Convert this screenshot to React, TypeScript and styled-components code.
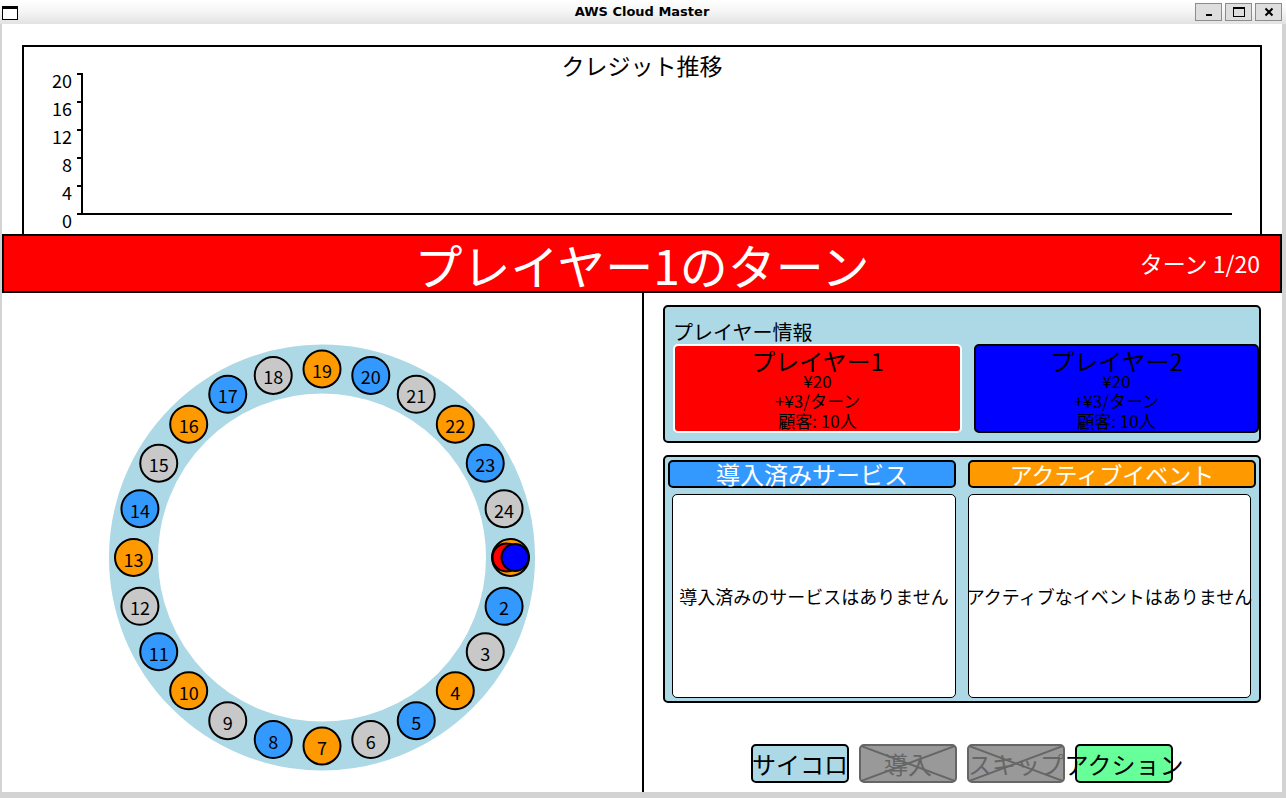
import React from "react";
import styled, { createGlobalStyle } from "styled-components";

const GlobalStyle = createGlobalStyle`
  html, body { margin: 0; padding: 0; background: #ffffff; }
  body { font-family: "Noto Sans CJK JP", "Noto Sans", sans-serif; }
  * { box-sizing: border-box; }
`;

const JP = `"Noto Sans CJK JP", "Noto Sans", sans-serif`;

const Window = styled.div`
  width: 1286px;
  height: 798px;
  display: flex;
  flex-direction: column;
  overflow: hidden;
  background: #d3d3d3;
`;

const TitleBar = styled.div`
  flex: none;
  height: 24px;
  display: grid;
  grid-template-columns: 1fr auto 1fr;
  align-items: center;
  padding: 0 4px 0 2px;
  background: linear-gradient(#ffffff 0%, #f6f6f6 45%, #e2e2e2 100%);
`;

const AppIcon = styled.div`
  width: 16px;
  height: 14px;
  margin-top: 1px;
  border: 1px solid #000;
  border-top-width: 3px;
  background: #fff;
`;

const TitleText = styled.div`
  font-family: "DejaVu Sans", sans-serif;
  font-weight: bold;
  font-size: 13px;
  color: #000;
  line-height: 20px;
`;

const WinButtons = styled.div`
  justify-self: end;
  display: flex;
  gap: 3px;
`;

const WinButton = styled.div`
  width: 27px;
  height: 18px;
  background: #dedede;
  border: 1px solid #8c8c8c;
  display: flex;
  align-items: center;
  justify-content: center;
  margin-top: -1px;
`;

const Frame = styled.div`
  flex: 1;
  margin: 0 4px 6px 2px;
  background: #ffffff;
  display: flex;
  flex-direction: column;
  min-height: 0;
`;

const ChartBox = styled.div`
  flex: none;
  height: 189px;
  margin: 21px 20px 0 20px;
  border: 2px solid #000;
  border-bottom: none;
  display: flex;
  flex-direction: column;
`;

const ChartTitle = styled.div`
  height: 15px;
  margin-top: 6px;
  line-height: 24px;
  font-size: 23px;
  text-align: center;
  color: #000;
  font-family: ${JP};
`;

const ChartSvg = styled.svg`
  display: block;
  overflow: visible;
  margin-top: 2px;
`;

const Banner = styled.div`
  flex: none;
  height: 59px;
  border: 2px solid #000;
  background: #ff0000;
  display: grid;
  grid-template-columns: 1fr auto 1fr;
  align-items: center;
  color: #ffffff;
`;

const BannerTitle = styled.div`
  grid-column: 2;
  font-size: 48px;
  line-height: 1;
  white-space: nowrap;
  font-family: ${JP};
`;

const BannerTurn = styled.div`
  grid-column: 3;
  justify-self: end;
  margin-right: 20px;
  font-size: 23px;
  line-height: 1;
  white-space: nowrap;
  font-family: ${JP};
`;

const Bottom = styled.div`
  flex: 1;
  display: flex;
  min-height: 0;
`;

const BoardPanel = styled.div`
  flex: none;
  width: 642px;
  border-right: 2px solid #000;
`;

const BoardSvg = styled.svg`
  display: block;
`;

const SidePanel = styled.div`
  flex: 1;
  display: flex;
  flex-direction: column;
  padding: 12px 21px 0 19px;
`;

const InfoBox = styled.div`
  height: 138px;
  border: 2px solid #000;
  border-radius: 5px;
  background: #add8e6;
  padding: 13px 0 0 8px;
  display: flex;
  flex-direction: column;
`;

const InfoLabel = styled.div`
  font-size: 20px;
  line-height: 24px;
  color: #000;
  white-space: nowrap;
`;

const CardRow = styled.div`
  display: grid;
  grid-template-columns: 289px 1fr;
  gap: 12px;
`;

const PlayerCard = styled.div<{ $bg: string; $active: boolean }>`
  height: 89px;
  background: ${(p) => p.$bg};
  border: 2px solid ${(p) => (p.$active ? "#ffffff" : "#000000")};
  border-radius: 5px;
  padding-top: 5px;
  display: flex;
  flex-direction: column;
  align-items: center;
  color: #000;
`;

const CardName = styled.div`
  font-size: 24px;
  line-height: 20px;
  white-space: nowrap;
`;

const CardLine = styled.div`
  font-size: 17px;
  line-height: 20px;
  white-space: nowrap;
`;

const ServiceBox = styled.div`
  height: 248px;
  margin-top: 12px;
  border: 2px solid #000;
  border-radius: 5px;
  background: #add8e6;
  padding: 3px;
  display: grid;
  grid-template-columns: 288px 288px;
  column-gap: 12px;
`;

const ServiceColumn = styled.div`
  display: flex;
  flex-direction: column;
  gap: 6px;
`;

const ServiceHeader = styled.div<{ $bg: string; $size: number }>`
  height: 28px;
  background: ${(p) => p.$bg};
  border: 2px solid #000;
  border-radius: 5px;
  color: #ffffff;
  font-size: ${(p) => p.$size}px;
  line-height: 24px;
  text-align: center;
  white-space: nowrap;
`;

const ServiceBody = styled.div<{ $side: "left" | "right" }>`
  height: 204px;
  background: #ffffff;
  border: 1px solid #000;
  border-radius: 5px;
  margin-left: ${(p) => (p.$side === "left" ? "4px" : "0")};
  margin-right: ${(p) => (p.$side === "right" ? "5px" : "0")};
  display: flex;
  align-items: center;
  justify-content: center;
  font-size: 18px;
  color: #000;
  white-space: nowrap;
`;

const ButtonRow = styled.div`
  margin-top: 41px;
  display: flex;
  justify-content: center;
  gap: 10px;
`;

const GameButton = styled.div<{ $bg: string; $border: string; $color: string }>`
  position: relative;
  width: 98px;
  height: 39px;
  background: ${(p) => p.$bg};
  border: 2px solid ${(p) => p.$border};
  border-radius: 5px;
  color: ${(p) => p.$color};
  font-size: 24px;
  line-height: 35px;
  display: flex;
  justify-content: center;
  white-space: nowrap;
`;

const CrossOut = styled.svg`
  position: absolute;
  inset: 0;
  width: 100%;
  height: 100%;
`;

const tileColor = (n: number) =>
  n % 3 === 1 ? "#ff9900" : n % 3 === 2 ? "#3399ff" : "#c8c8c8";

const ticks = [20, 16, 12, 8, 4, 0];

function Chart() {
  const top = 4;
  const bottom = 144;
  const axisX = 58;
  return (
    <ChartSvg width={1236} height={162}>
      {ticks.map((t, i) => {
        const y = top + ((bottom - top) / 5) * i;
        return (
          <g key={t}>
            <line x1={axisX - 5} y1={y} x2={axisX} y2={y} stroke="#000" strokeWidth={2} />
            <text
              x={48}
              y={y + 6}
              textAnchor="end"
              dominantBaseline="central"
              fontSize={18}
              fontFamily={JP}
              fill="#000"
            >
              {t}
            </text>
          </g>
        );
      })}
      <line x1={axisX} y1={top - 1} x2={axisX} y2={bottom + 1} stroke="#000" strokeWidth={2} />
      <line x1={axisX} y1={bottom} x2={1208} y2={bottom} stroke="#000" strokeWidth={2} />
    </ChartSvg>
  );
}

function Board() {
  const cx = 320;
  const cy = 264.5;
  const R = 188.5;
  const pos = (n: number) => {
    const a = ((n - 1) * 15 * Math.PI) / 180;
    return { x: cx + R * Math.cos(a), y: cy + R * Math.sin(a) };
  };
  const start = pos(1);
  return (
    <BoardSvg width={640} height={499}>
      <circle cx={cx} cy={cy} r={188.5} fill="none" stroke="#add8e6" strokeWidth={49} />
      {Array.from({ length: 24 }, (_, i) => i + 1).map((n) => {
        const p = pos(n);
        return (
          <g key={n}>
            <circle cx={p.x} cy={p.y} r={18.5} fill={tileColor(n)} stroke="#000" strokeWidth={2} />
            <text
              x={p.x}
              y={p.y + 1}
              textAnchor="middle"
              dominantBaseline="central"
              fontSize={18}
              fontFamily={JP}
              fill="#000"
            >
              {n}
            </text>
          </g>
        );
      })}
      <circle cx={start.x - 4} cy={start.y} r={14} fill="#ff0000" stroke="#000" strokeWidth={2} />
      <circle cx={start.x + 4.5} cy={start.y} r={13.5} fill="#0000ff" stroke="#000" strokeWidth={2} />
    </BoardSvg>
  );
}

function Cross() {
  return (
    <CrossOut viewBox="0 0 100 100" preserveAspectRatio="none">
      <line x1="0" y1="0" x2="100" y2="100" stroke="#666" strokeWidth={2} vectorEffect="non-scaling-stroke" />
      <line x1="100" y1="0" x2="0" y2="100" stroke="#666" strokeWidth={2} vectorEffect="non-scaling-stroke" />
    </CrossOut>
  );
}

const players = [
  { name: "プレイヤー1", bg: "#ff0000", active: true },
  { name: "プレイヤー2", bg: "#0000ff", active: false },
];

export default function App() {
  return (
    <>
      <GlobalStyle />
      <Window>
        <TitleBar>
          <AppIcon />
          <TitleText>AWS Cloud Master</TitleText>
          <WinButtons>
            <WinButton>
              <svg width="12" height="12" viewBox="0 0 12 12">
                <rect x="3" y="8" width="6" height="2" fill="#000" />
              </svg>
            </WinButton>
            <WinButton>
              <svg width="14" height="12" viewBox="0 0 14 12">
                <rect x="1.5" y="1.5" width="11" height="9" fill="none" stroke="#000" strokeWidth={1} />
                <rect x="1" y="1" width="12" height="2" fill="#000" />
              </svg>
            </WinButton>
            <WinButton>
              <svg width="12" height="12" viewBox="0 0 12 12">
                <path d="M2.5 2.5 L9.5 9.5 M9.5 2.5 L2.5 9.5" stroke="#000" strokeWidth={2} />
              </svg>
            </WinButton>
          </WinButtons>
        </TitleBar>
        <Frame>
          <ChartBox>
            <ChartTitle>クレジット推移</ChartTitle>
            <Chart />
          </ChartBox>
          <Banner>
            <BannerTitle>プレイヤー1のターン</BannerTitle>
            <BannerTurn>ターン 1/20</BannerTurn>
          </Banner>
          <Bottom>
            <BoardPanel>
              <Board />
            </BoardPanel>
            <SidePanel>
              <InfoBox>
                <InfoLabel>プレイヤー情報</InfoLabel>
                <CardRow>
                  {players.map((p) => (
                    <PlayerCard key={p.name} $bg={p.bg} $active={p.active}>
                      <CardName>{p.name}</CardName>
                      <CardLine>¥20</CardLine>
                      <CardLine>+¥3/ターン</CardLine>
                      <CardLine>顧客: 10人</CardLine>
                    </PlayerCard>
                  ))}
                </CardRow>
              </InfoBox>
              <ServiceBox>
                <ServiceColumn>
                  <ServiceHeader $bg="#3399ff" $size={24}>導入済みサービス</ServiceHeader>
                  <ServiceBody $side="left">導入済みのサービスはありません</ServiceBody>
                </ServiceColumn>
                <ServiceColumn>
                  <ServiceHeader $bg="#ff9900" $size={23}>アクティブイベント</ServiceHeader>
                  <ServiceBody $side="right">アクティブなイベントはありません</ServiceBody>
                </ServiceColumn>
              </ServiceBox>
              <ButtonRow>
                <GameButton $bg="#add8e6" $border="#000" $color="#000">サイコロ</GameButton>
                <GameButton $bg="#999999" $border="#666666" $color="#666666">
                  導入
                  <Cross />
                </GameButton>
                <GameButton $bg="#999999" $border="#666666" $color="#666666">
                  スキップ
                  <Cross />
                </GameButton>
                <GameButton $bg="#66ff99" $border="#000" $color="#000">アクション</GameButton>
              </ButtonRow>
            </SidePanel>
          </Bottom>
        </Frame>
      </Window>
    </>
  );
}
